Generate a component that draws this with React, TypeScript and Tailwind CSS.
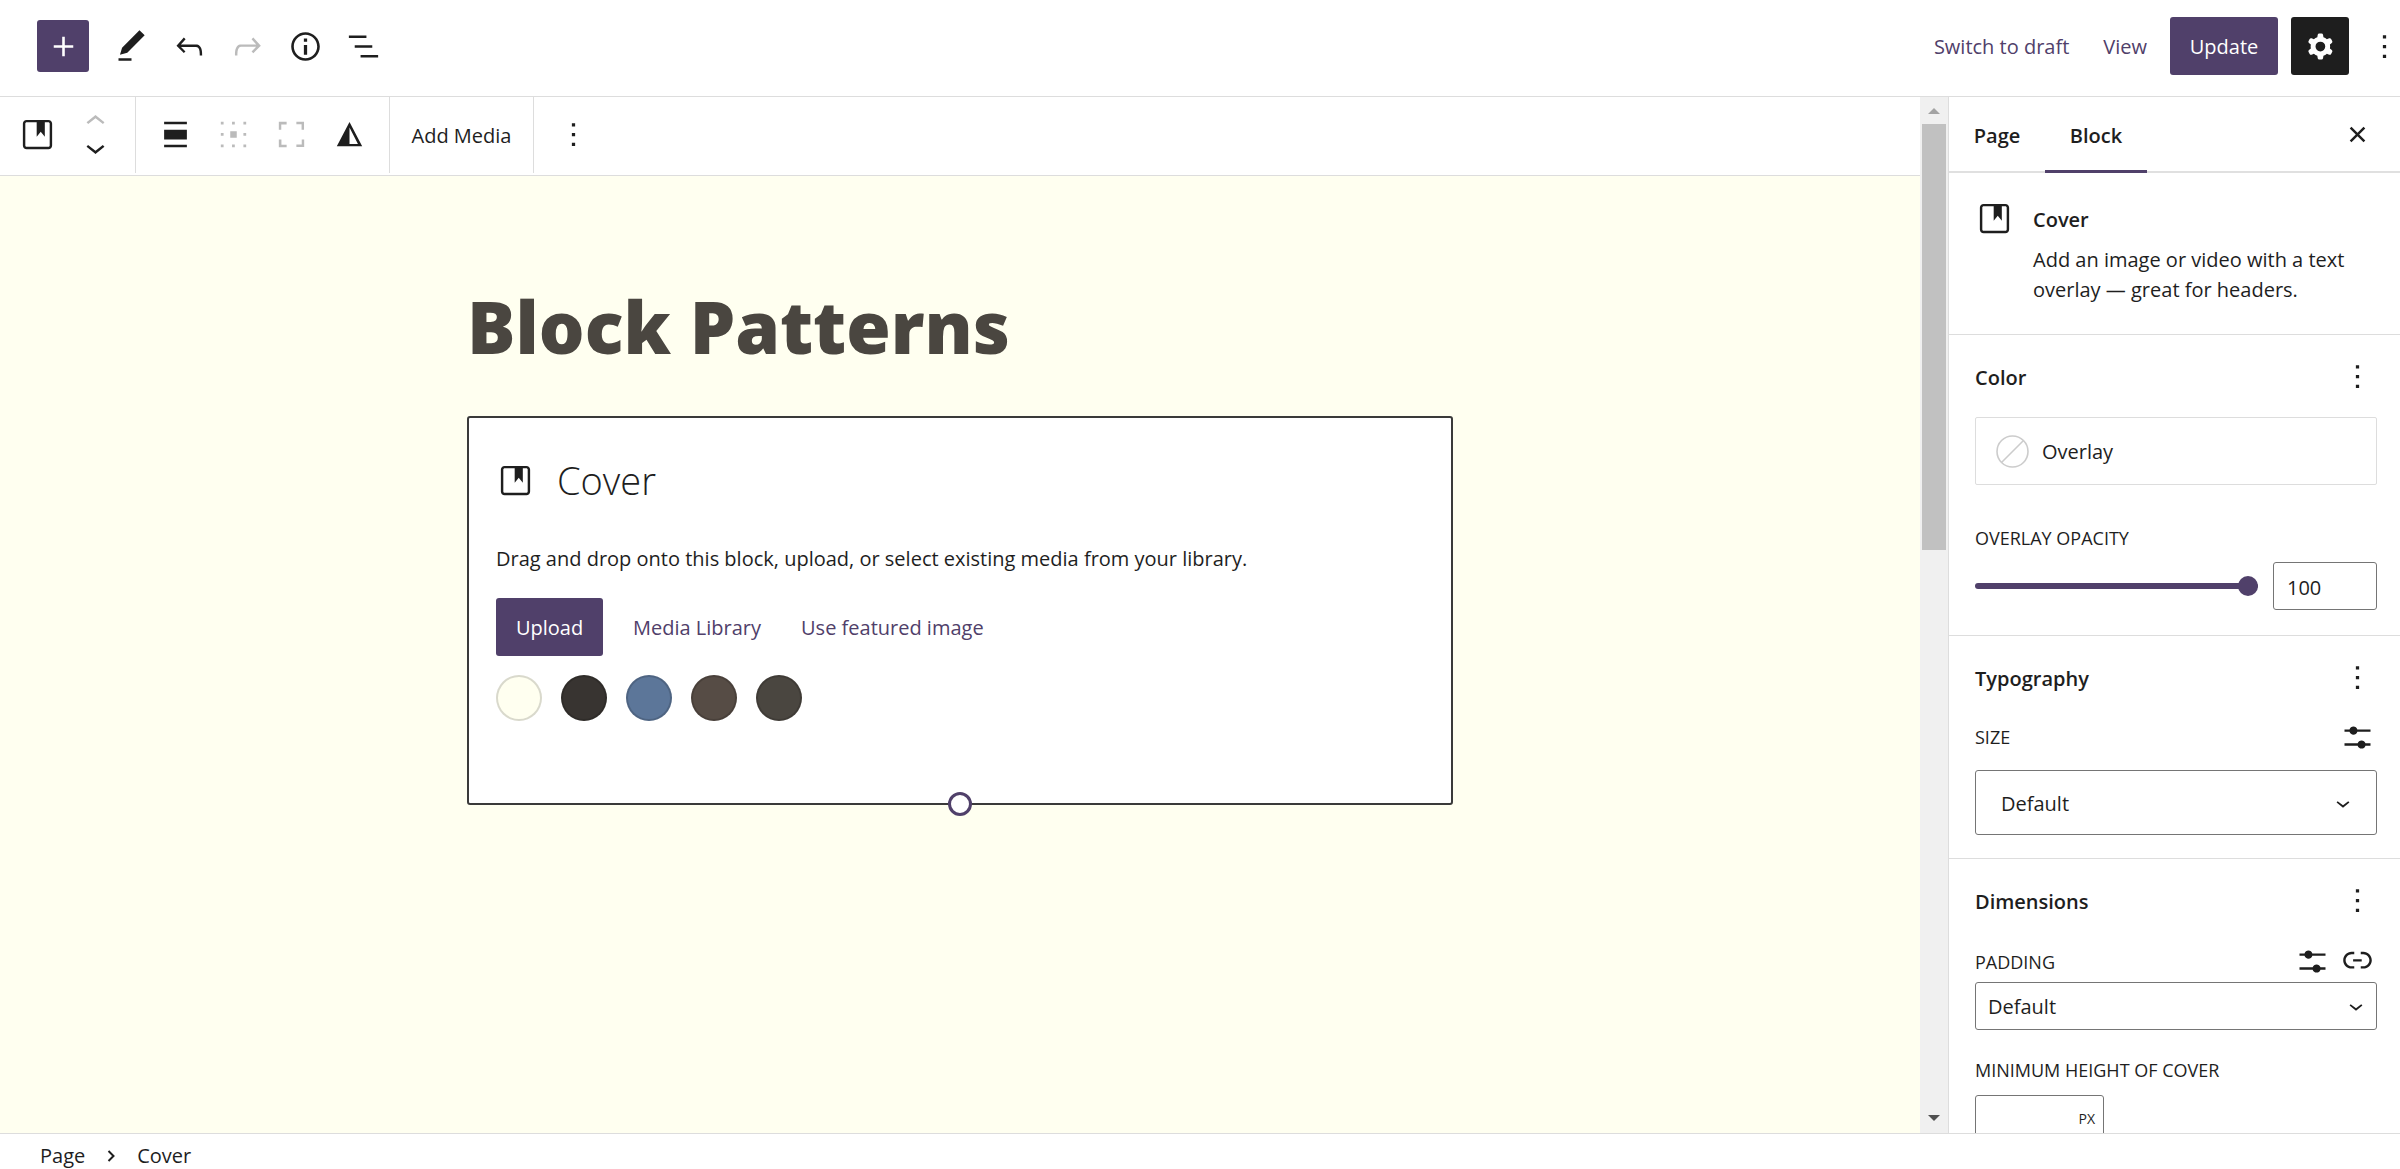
import { useState } from "react";
import type { ReactNode } from "react";

const icons = {
  plus: "M18 11.2h-5.2V6h-1.6v5.2H6v1.6h5.2V18h1.6v-5.2H18z",
  pencil: "M20.1 5.1L16.9 2 6.2 12.7l-1.3 4.4 4.5-1.3L20.1 5.1zM4 20.8h8v-1.5H4v1.5z",
  undo: "M18.3 11.7c-.6-.6-1.4-.9-2.3-.9H6.7l2.9-3.3-1.1-1-4.5 5L8.5 16l1-1-2.7-2.7H16c.5 0 .9.2 1.3.5 1 1 1 3.4 1 4.5v.3h1.5v-.2c0-1.5 0-4.3-1.5-5.7z",
  redo: "M15.6 6.5l-1.1 1 2.9 3.3H8c-.9 0-1.7.3-2.3.9-1.4 1.5-1.4 4.2-1.4 5.6v.2h1.5v-.3c0-1.1 0-3.5 1-4.5.3-.3.7-.5 1.3-.5h9.2L14.5 15l1.1 1.1 4.6-4.6-4.6-5z",
  info: "M12 3.2c-4.8 0-8.8 3.9-8.8 8.8 0 4.8 3.9 8.8 8.8 8.8 4.8 0 8.8-3.9 8.8-8.8 0-4.8-4-8.8-8.8-8.8zm0 16c-4 0-7.2-3.3-7.2-7.2C4.8 8 8 4.8 12 4.8s7.2 3.3 7.2 7.2c0 4-3.2 7.2-7.2 7.2zM11 17h2v-6h-2v6zm0-8h2V7h-2v2z",
  listView: "M13.8 5.2H3v1.5h10.8V5.2zm-3.6 12v1.5H21v-1.5H10.2zm7.2-6H6.6v1.5h10.8v-1.5z",
  cover: "M18.7 3H5.3C4 3 3 4 3 5.3v13.4C3 20 4 21 5.3 21h13.4c1.3 0 2.3-1 2.3-2.3V5.3C21 4 20 3 18.7 3zm.8 15.7c0 .4-.4.8-.8.8H5.3c-.4 0-.8-.4-.8-.8V5.3c0-.4.4-.8.8-.8h6.2v8.9l2.5-3.1 2.5 3.1V4.5h2.2c.4 0 .8.4.8.8v13.4z",
  up: "M6.5 12.4L12 8l5.5 4.4-.9 1.2L12 10l-4.5 3.6-1-1.2z",
  down: "M17.5 11.6L12 16l-5.5-4.4.9-1.2L12 14l4.5-3.6 1 1.2z",
  align: "M5 15h14V9H5v6zm0 4.8h14v-1.5H5v1.5zM5 4.2v1.5h14V4.2H5z",
  matrix: "M4.2 4.2h1.7v1.7H4.200zM11.100 4.200h1.700v1.700h-1.700zM18.100 4.200h1.700v1.700h-1.700zM4.200 11.100h1.700v1.700H4.200zM10 10h4v4h-4zM18.100 11.100h1.700v1.700h-1.700zM4.200 18.100h1.700v1.700H4.200zM11.100 18.100h1.700v1.700h-1.700zM18.100 18.100h1.700v1.700h-1.700z",
  fullscreen: "M4.2 9h1.5V5.8H9V4.2H4.2V9zm14 9.2H15v1.5h4.8V15h-1.5v3.2zM15 4.2v1.5h3.2V9h1.5V4.2H15zM5.8 15H4.2v4.8H9v-1.5H5.8V15z",
  duotone: "M12 4.3L4.2 19.2h15.6L12 4.3zm0 3.4l5.2 10.1H12V7.7z",
  more: "M13 19h-2v-2h2v2zm0-6h-2v-2h2v2zm0-6h-2V5h2v2z",
  cog: "M10.289 4.836A1 1 0 0111.275 4h1.306a1 1 0 01.987.836l.244 1.466c.787.26 1.503.679 2.108 1.218l1.393-.522a1 1 0 011.216.437l.653 1.13a1 1 0 01-.23 1.273l-1.148.944a6.025 6.025 0 010 2.435l1.149.946a1 1 0 01.23 1.272l-.653 1.13a1 1 0 01-1.216.437l-1.394-.522c-.605.54-1.32.958-2.108 1.218l-.244 1.466a1 1 0 01-.987.836h-1.306a1 1 0 01-.986-.836l-.244-1.466a5.995 5.995 0 01-2.108-1.218l-1.394.522a1 1 0 01-1.217-.436l-.653-1.131a1 1 0 01.23-1.272l1.149-.946a6.026 6.026 0 010-2.435l-1.148-.944a1 1 0 01-.23-1.272l.653-1.131a1 1 0 011.217-.437l1.393.522a5.994 5.994 0 012.108-1.218l.244-1.466zM14.929 12a3 3 0 11-6 0 3 3 0 016 0z",
  close: "M12 13.06l3.712 3.713 1.061-1.06L13.061 12l3.712-3.712-1.06-1.06L12 10.938 8.288 7.227l-1.061 1.06L10.939 12l-3.712 3.712 1.06 1.061L12 13.061z",
  sliders: "M14.5 13.8c-1.1 0-2.1.7-2.4 1.8H4V17h8.1c.3 1 1.3 1.8 2.4 1.8s2.1-.7 2.4-1.8H20v-1.5h-3.1c-.3-1-1.3-1.7-2.4-1.7zM11.9 7c-.3-1-1.3-1.8-2.4-1.8S7.4 6 7.1 7H4v1.5h3.1c.3 1 1.3 1.8 2.4 1.8s2.1-.7 2.4-1.8H20V7h-8.1z",
  link: "M15.6 7.2H14v1.5h1.6c2 0 3.7 1.7 3.7 3.7s-1.7 3.7-3.7 3.7H14v1.5h1.6c2.8 0 5.2-2.3 5.2-5.2 0-2.9-2.3-5.2-5.2-5.2zM4.7 12.4c0-2 1.7-3.7 3.7-3.7H10V7.2H8.4c-2.9 0-5.2 2.3-5.2 5.2 0 2.9 2.3 5.2 5.2 5.2H10v-1.5H8.4c-2 0-3.7-1.7-3.7-3.7zm4.6.9h5.3v-1.5H9.3v1.5z",
};

type IconName = keyof typeof icons;

function Icon({ name, className = "size-[39px]" }: { name: IconName; className?: string }) {
  return (
    <svg viewBox="0 0 24 24" fill="currentColor" aria-hidden="true" className={`shrink-0 ${className}`}>
      <path fillRule={name === "cog" || name === "duotone" ? "evenodd" : undefined} d={icons[name]} />
    </svg>
  );
}

function IconButton({ name, label, disabled }: { name: IconName; label: string; disabled?: boolean }) {
  return (
    <button type="button" aria-label={label} disabled={disabled} className="flex h-[58px] w-[58px] items-center justify-center disabled:text-[#bbbbbb]">
      <Icon name={name} />
    </button>
  );
}

function Header() {
  return (
    <header className="flex h-[97px] shrink-0 items-center justify-between border-b border-[#dddddd] pb-1 pl-[37px]">
      <div className="flex items-center">
        <button type="button" aria-label="Toggle block inserter" className="mr-[13px] flex size-[52px] items-center justify-center rounded-[3px] bg-[#50406a] text-white">
          <Icon name="plus" />
        </button>
        <IconButton name="pencil" label="Tools" />
        <IconButton name="undo" label="Undo" />
        <IconButton name="redo" label="Redo" disabled />
        <IconButton name="info" label="Details" />
        <IconButton name="listView" label="List view" />
      </div>
      <div className="-mr-1 flex items-center text-[#50406a]">
        <button type="button" className="mr-[34px] pt-[2px]">Switch to draft</button>
        <a href="#view" className="mr-[23px] pt-[2px]">View</a>
        <button type="button" className="mr-[13px] h-[58px] w-[108px] rounded-[3px] bg-[#50406a] pt-[2px] text-white">Update</button>
        <button type="button" aria-label="Settings" className="flex size-[58px] items-center justify-center rounded-[3px] bg-[#1e1e1e] text-white">
          <Icon name="cog" />
        </button>
        <button type="button" aria-label="Options" className="ml-4 text-[#1e1e1e]">
          <Icon name="more" />
        </button>
      </div>
    </header>
  );
}

function BlockToolbar() {
  return (
    <div role="toolbar" aria-label="Block tools" className="flex h-[79px] shrink-0 border-b border-[#dddddd]">
      <div className="flex h-[76px] w-[136px] items-center border-r border-[#dddddd] pb-[2px] pl-2">
        <IconButton name="cover" label="Cover" />
        <div className="flex w-[58px] flex-col items-center">
          <button type="button" aria-label="Move up" disabled className="flex h-[26px] items-center overflow-hidden text-[#bbbbbb]">
            <Icon name="up" />
          </button>
          <button type="button" aria-label="Move down" className="flex h-[26px] items-center overflow-hidden">
            <Icon name="down" />
          </button>
        </div>
      </div>
      <div className="flex h-[76px] w-[254px] items-center border-r border-[#dddddd] pb-[2px] pl-[10px]">
        <IconButton name="align" label="Align" />
        <IconButton name="matrix" label="Change content position" disabled />
        <IconButton name="fullscreen" label="Toggle full height" disabled />
        <IconButton name="duotone" label="Apply duotone filter" />
      </div>
      <div className="flex h-[76px] w-36 items-center justify-center border-r border-[#dddddd] pt-[2px]">
        <button type="button">Add Media</button>
      </div>
      <div className="flex h-[76px] items-center pb-[2px] pl-[10px]">
        <IconButton name="more" label="Options" />
      </div>
    </div>
  );
}

const swatches = [
  { label: "Ivory", color: "bg-[#fffff0]" },
  { label: "Charcoal", color: "bg-[#383431]" },
  { label: "Blue", color: "bg-[#5c7699]" },
  { label: "Brown", color: "bg-[#564c45]" },
  { label: "Grey", color: "bg-[#4a4640]" },
];

function CoverPlaceholder() {
  return (
    <section aria-label="Block: Cover" className="relative h-[389px] rounded-[3px] border-2 border-[#3a3a3a] bg-white px-[27px] pt-[34px] text-[#1e1e1e]">
      <h2 className="flex h-14 items-center gap-[22px] text-[38px] font-light">
        <Icon name="cover" />
        Cover
      </h2>
      <p className="mt-9 leading-[30px]">Drag and drop onto this block, upload, or select existing media from your library.</p>
      <div className="mt-6 flex items-center text-[#50406a]">
        <button type="button" className="h-[58px] w-[107px] rounded-[3px] bg-[#50406a] pt-[2px] text-white">Upload</button>
        <button type="button" className="ml-[30px] pt-[2px]">Media Library</button>
        <button type="button" className="ml-10 pt-[2px]">Use featured image</button>
      </div>
      <div className="mt-[19px] flex gap-[19px]">
        {swatches.map((s) => (
          <button key={s.label} type="button" aria-label={s.label} className={`size-[46px] rounded-full border-2 border-black/15 ${s.color}`} />
        ))}
      </div>
      <button type="button" aria-label="Resize block" className="absolute -bottom-[13px] left-1/2 size-6 -translate-x-1/2 rounded-full border-[3px] border-[#50406a] bg-white" />
    </section>
  );
}

function Scrollbar() {
  return (
    <div aria-hidden="true" className="flex w-7 shrink-0 flex-col items-center bg-[#f0f0f0]">
      <svg viewBox="0 0 28 27" className="h-[27px] w-7 shrink-0 fill-[#a3a3a3]"><path d="M8 17l6-6 6 6z" /></svg>
      <div className="h-[426px] w-6 bg-[#c1c1c1]" />
      <svg viewBox="0 0 28 27" className="mt-auto h-[27px] w-7 shrink-0 fill-[#505050]"><path d="M8 9l6 6 6-6z" /></svg>
    </div>
  );
}

function PanelTitle({ children }: { children: string }) {
  return (
    <div className="flex items-center justify-between">
      <h2 className="pt-[2px] font-semibold">{children}</h2>
      <button type="button" aria-label={`${children} options`}>
        <Icon name="more" />
      </button>
    </div>
  );
}

function Panel({ children, className = "" }: { children: ReactNode; className?: string }) {
  return <section className={`border-t border-[#dddddd] pl-[26px] pr-[23px] pt-[22px] ${className}`}>{children}</section>;
}

function SelectBox({ id, className, arrow }: { id: string; className: string; arrow: string }) {
  return (
    <div className="relative">
      <select id={id} defaultValue="default" className={`w-full appearance-none rounded-[3px] border border-[#757575] bg-white pt-[2px] ${className}`}>
        <option value="default">Default</option>
      </select>
      <Icon name="down" className={`pointer-events-none absolute top-1/2 size-7 -translate-y-1/2 ${arrow}`} />
    </div>
  );
}

function Sidebar() {
  const [opacity, setOpacity] = useState(100);
  return (
    <aside className="flex w-[452px] shrink-0 flex-col overflow-hidden border-l border-[#dddddd] bg-white">
      <div className="flex h-[76px] shrink-0 items-stretch border-b-2 border-[#e0e0e0]">
        <div role="tablist" className="flex font-semibold">
          <button type="button" role="tab" aria-selected="false" className="-mb-[2px] w-24 pt-[2px]">Page</button>
          <button type="button" role="tab" aria-selected="true" className="-mb-[2px] w-[102px] border-b-[3px] border-[#50406a] pt-[5px]">Block</button>
        </div>
        <button type="button" aria-label="Close settings" className="ml-auto mr-[23px]">
          <Icon name="close" />
        </button>
      </div>

      <div className="flex h-[161px] shrink-0 gap-[19px] pl-[26px] pr-5 pt-[26px]">
        <Icon name="cover" />
        <div>
          <h2 className="pt-[2px] font-semibold leading-[38px]">Cover</h2>
          <p className="mt-[6px] leading-[30px]">Add an image or video with a text overlay — great for headers.</p>
        </div>
      </div>

      <Panel className="h-[301px] shrink-0">
        <PanelTitle>Color</PanelTitle>
        <button type="button" className="mt-[21px] flex h-[68px] w-full items-center gap-[13px] rounded-[2px] border border-[#dddddd] pl-5">
          <svg viewBox="0 0 33 33" aria-hidden="true" className="size-[33px] fill-none stroke-[#cccccc] stroke-[1.6]">
            <circle cx="16.500" cy="16.500" r="15.500" />
            <path d="M5.500 27.500L27.500 5.500" />
          </svg>
          <span className="pt-[2px]">Overlay</span>
        </button>
        <label htmlFor="opacity" className="mt-[38px] block text-[18px] font-medium uppercase leading-[30px]">Overlay opacity</label>
        <div className="mt-[9px] flex items-center gap-[15px]">
          <input
            id="opacity"
            type="range"
            min={0}
            max={100}
            value={opacity}
            onChange={(e) => setOpacity(Number(e.target.value))}
            className="h-[6px] min-w-0 flex-1 appearance-none rounded-full bg-[#50406a] [&::-webkit-slider-thumb]:size-5 [&::-webkit-slider-thumb]:appearance-none [&::-webkit-slider-thumb]:rounded-full [&::-webkit-slider-thumb]:bg-[#50406a]"
          />
          <input
            type="text"
            aria-label="Overlay opacity value"
            value={opacity}
            onChange={(e) => setOpacity(Number(e.target.value) || 0)}
            className="h-12 w-[104px] rounded-[3px] border border-[#757575] pl-[13px] pt-[2px]"
          />
        </div>
      </Panel>

      <Panel className="h-[223px] shrink-0">
        <PanelTitle>Typography</PanelTitle>
        <div className="mt-[21px] flex items-center justify-between">
          <label htmlFor="size" className="text-[18px] font-medium uppercase">Size</label>
          <button type="button" aria-label="Set custom size">
            <Icon name="sliders" />
          </button>
        </div>
        <div className="mt-[13px]">
          <SelectBox id="size" className="h-[65px] pl-[25px]" arrow="right-5" />
        </div>
      </Panel>

      <Panel>
        <PanelTitle>Dimensions</PanelTitle>
        <div className="mt-[20px] flex h-[42px] items-center">
          <label htmlFor="padding" className="mr-auto pt-[2px] text-[18px] font-medium uppercase">Padding</label>
          <button type="button" aria-label="Set custom padding" className="mr-[6px]">
            <Icon name="sliders" />
          </button>
          <button type="button" aria-label="Unlink sides" className="self-start">
            <Icon name="link" />
          </button>
        </div>
        <SelectBox id="padding" className="h-12 pl-3" arrow="right-[7px]" />
        <label htmlFor="min-height" className="mt-[25px] block text-[18px] font-medium uppercase leading-[30px]">Minimum height of cover</label>
        <div className="mt-[10px] flex h-12 w-[129px] items-center rounded-[3px] border border-[#757575] pr-2">
          <input id="min-height" type="text" className="min-w-0 flex-1" />
          <span className="text-sm">PX</span>
        </div>
      </Panel>
    </aside>
  );
}

export default function App() {
  return (
    <div className="flex h-screen flex-col overflow-hidden bg-white font-['Open_Sans',sans-serif] text-[20px] text-[#1e1e1e]">
      <Header />
      <div className="flex min-h-0 flex-1">
        <div className="flex min-w-0 flex-1 flex-col">
          <BlockToolbar />
          <main className="flex-1 bg-[#fffff0] pt-[98px]">
            <div className="mx-auto max-w-[986px]">
              <h1 className="mb-[38px] text-[72px] font-extrabold leading-[104px] text-[#4a4640]">Block Patterns</h1>
              <CoverPlaceholder />
            </div>
          </main>
        </div>
        <Scrollbar />
        <Sidebar />
      </div>
      <footer className="h-9 shrink-0 border-t border-[#dddddd] pl-10">
        <nav aria-label="Block breadcrumb" className="flex h-full items-center pt-2">
          <button type="button">Page</button>
          <svg viewBox="0 0 8 12" aria-hidden="true" className="mx-[22px] h-3 w-2 fill-none stroke-current stroke-2"><path d="M1.500 1L6.500 6L1.500 11" /></svg>
          <button type="button">Cover</button>
        </nav>
      </footer>
    </div>
  );
}
